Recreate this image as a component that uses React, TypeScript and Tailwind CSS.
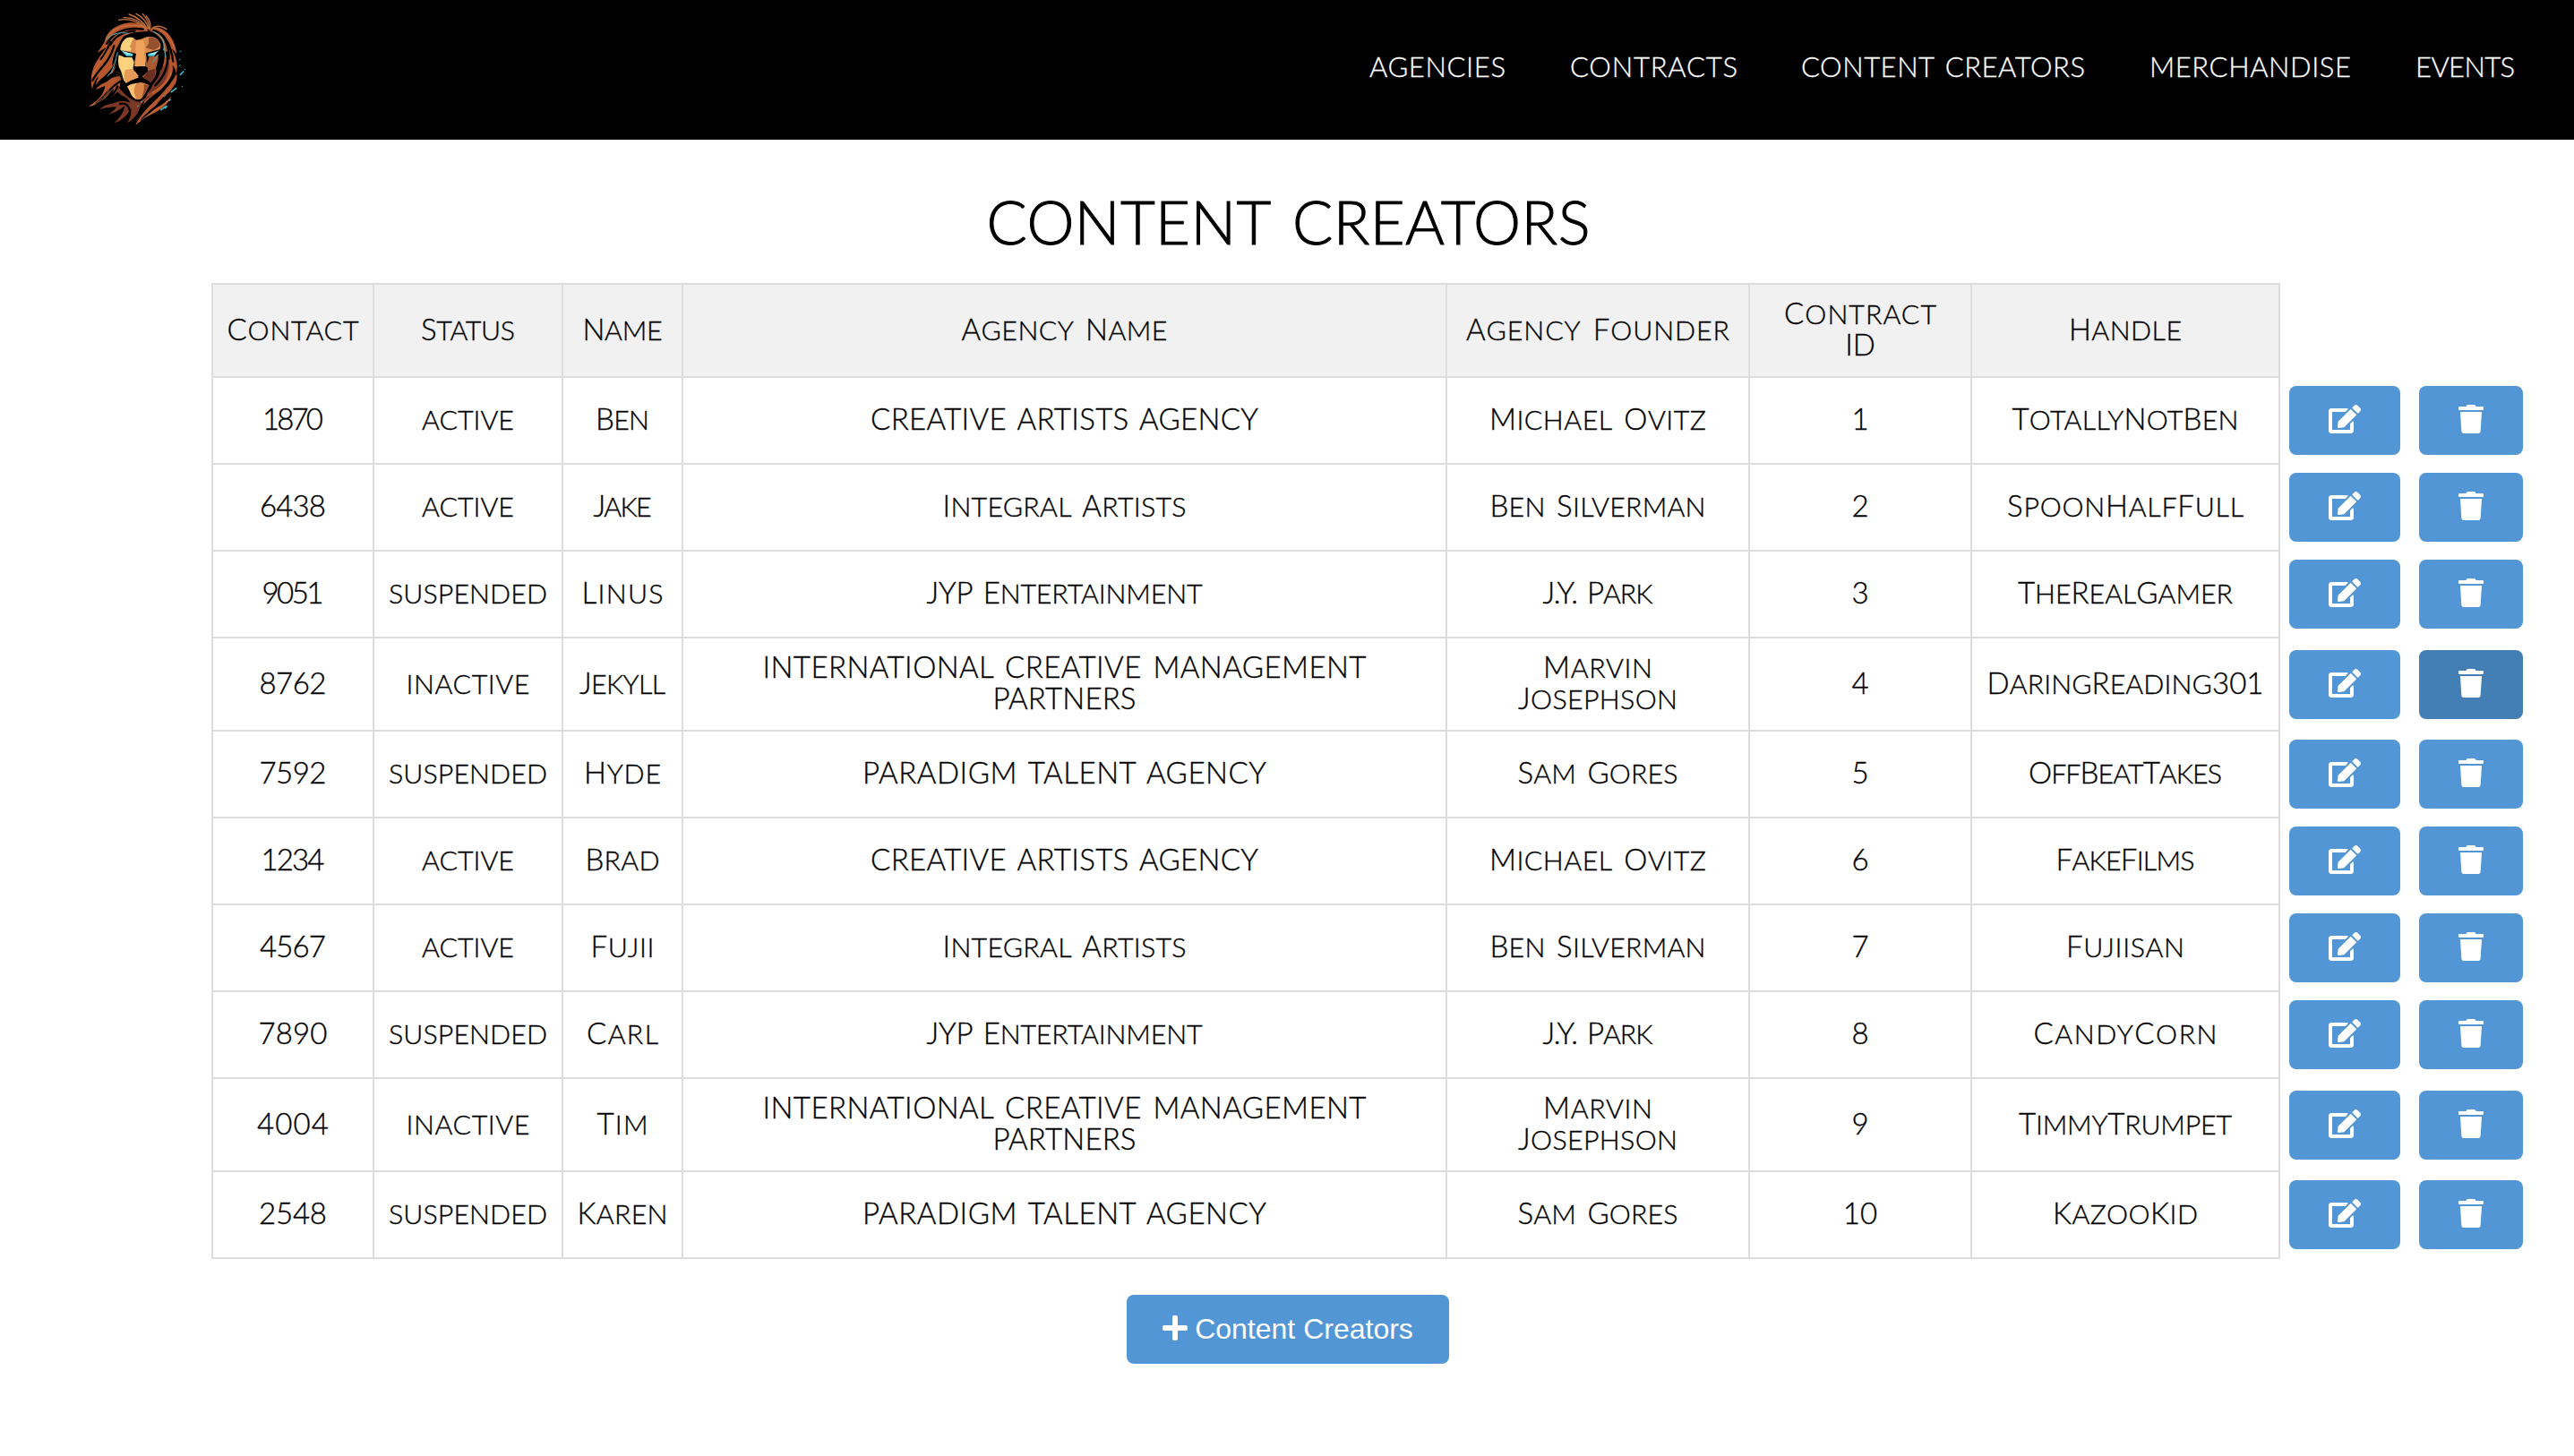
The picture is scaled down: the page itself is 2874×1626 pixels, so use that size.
import React, { useLayoutEffect, useRef, useState } from 'react';
import { FaEdit, FaPlus, FaTrash } from 'react-icons/fa';

type Label = [text: string, width: number];

/* Small-cap label whose tracking is adjusted so that it spans `width` pixels. */
function Caps({ label, small = false }: { label: Label; small?: boolean }) {
  const [text, width] = label;
  const ref = useRef<HTMLSpanElement>(null);
  const [tracking, setTracking] = useState(0);
  useLayoutEffect(() => {
    if (ref.current && text.length > 2) {
      const natural = ref.current.getBoundingClientRect().width;
      setTracking((width + 3 - natural) / (text.length - 1));
    }
  }, [text, width]);
  const parts = small ? [text] : text.split(/([a-z]+)/).filter(Boolean);
  return (
    <span
      ref={ref}
      className="inline-block whitespace-pre [word-spacing:0.1em]"
      style={{ letterSpacing: tracking, marginRight: -tracking }}
    >
      {parts.map((p, i) =>
        /[a-z]/.test(p) ? (
          <span key={i} className="text-[0.92em] uppercase">
            {p}
          </span>
        ) : (
          p
        ),
      )}
    </span>
  );
}

const nav: { label: Label; gap: string }[] = [
  { label: ['AGENCIES', 149], gap: 'mr-[72px]' },
  { label: ['CONTRACTS', 184], gap: 'mr-[71px]' },
  { label: ['CONTENT CREATORS', 314], gap: 'mr-[72px]' },
  { label: ['MERCHANDISE', 222], gap: 'mr-[72px]' },
  { label: ['EVENTS', 108], gap: 'mr-[66px]' },
];

const head: Label[][] = [
  [['Contact', 144]],
  [['Status', 102]],
  [['Name', 86]],
  [['Agency Name', 227]],
  [['Agency Founder', 291]],
  [['Contract', 167], ['ID', 34]],
  [['Handle', 123]],
];

const active: Label = ['active', 100];
const suspended: Label = ['suspended', 174];
const inactive: Label = ['inactive', 135];

const caa: Label[][] = [[['CREATIVE ARTISTS AGENCY', 430]], [['Michael Ovitz', 239]]];
const integral: Label[][] = [[['Integral Artists', 269]], [['Ben Silverman', 238]]];
const jyp: Label[][] = [[['JYP Entertainment', 305]], [['J.Y. Park', 120]]];
const icm: Label[][] = [
  [['INTERNATIONAL CREATIVE MANAGEMENT', 671], ['PARTNERS', 157]],
  [['Marvin', 119], ['Josephson', 175]],
];
const paradigm: Label[][] = [[['PARADIGM TALENT AGENCY', 448]], [['Sam Gores', 176]]];

const rows: Label[][][] = [
  [[['1870', 65]], [active], [['Ben', 57]], ...caa, [['1', 6]], [['TotallyNotBen', 250]]],
  [[['6438', 71]], [active], [['Jake', 62]], ...integral, [['2', 15]], [['SpoonHalfFull', 261]]],
  [[['9051', 66]], [suspended], [['Linus', 88]], ...jyp, [['3', 15]], [['TheRealGamer', 237]]],
  [[['8762', 72]], [inactive], [['Jekyll', 93]], ...icm, [['4', 15]], [['DaringReading301', 306]]],
  [[['7592', 72]], [suspended], [['Hyde', 83]], ...paradigm, [['5', 15]], [['OffBeatTakes', 213]]],
  [[['1234', 68]], [active], [['Brad', 80]], ...caa, [['6', 15]], [['FakeFilms', 152]]],
  [[['4567', 71]], [active], [['Fujii', 68]], ...integral, [['7', 15]], [['Fujiisan', 129]]],
  [[['7890', 74]], [suspended], [['Carl', 77]], ...jyp, [['8', 15]], [['CandyCorn', 202]]],
  [[['4004', 77]], [inactive], [['Tim', 54]], ...icm, [['9', 15]], [['TimmyTrumpet', 235]]],
  [[['2548', 73]], [suspended], [['Karen', 98]], ...paradigm, [['10', 31]], [['KazooKid', 159]]],
];

function Lines({ lines }: { lines: Label[] }) {
  return (
    <div className="flex flex-col items-center pb-[4px]">
      {lines.map((l) => (
        <div key={l[0]} className="h-[35px]">
          <Caps label={l} />
        </div>
      ))}
    </div>
  );
}

function Lion() {
  return (
    <svg viewBox="0 0 600 468" className="ml-[60px] h-[156px] w-[200px]">
      {/* mane, back layers */}
      <g fill="#b5562f">
        <path d="M318 104C300 76 262 70 232 80C196 90 176 112 170 140C158 160 150 170 146 178C160 168 170 162 176 160C160 182 138 208 130 236C124 256 124 282 129 298C134 276 142 262 150 256C146 268 142 276 140 286C156 262 176 250 196 246C206 232 210 214 212 200C204 206 200 214 196 222C196 196 204 170 216 152C226 130 244 114 270 108Z" />
        <path d="M322 98C346 84 376 98 392 124C404 142 410 162 412 182C406 172 402 168 396 164C412 196 418 220 410 246C406 228 402 222 398 218C402 252 392 276 366 296C340 314 318 328 300 352C310 316 332 290 346 268C362 240 372 208 372 176C370 140 350 112 322 104Z" />
        <path d="M226 256C204 254 190 262 178 274C158 282 148 290 140 300C154 296 164 290 172 288C168 316 148 338 114 358C144 352 168 336 184 316C190 306 196 300 202 296C200 308 196 316 190 326C214 312 220 296 222 286Z" />
        <path d="M412 246C416 272 404 300 376 318C356 332 346 350 330 368C352 358 376 344 394 322C386 350 356 370 330 382C306 394 288 406 274 420C282 398 296 384 310 366C334 340 384 300 412 246Z" />
      </g>
      <g fill="#7b3726">
        <path d="M208 276C206 302 216 314 232 322C246 328 252 336 256 344C238 336 220 336 206 344C190 350 172 346 152 368C176 358 194 360 210 358C202 370 198 374 182 384C208 376 222 368 238 354C236 372 226 390 202 412C228 404 246 388 258 362C262 376 258 392 246 412C272 396 284 378 290 356C298 338 322 330 334 310L286 342C250 334 222 302 208 276Z" />
        <path d="M346 244C336 274 330 298 310 316C330 312 356 296 372 272C386 248 390 214 386 186C378 214 364 234 346 244Z" />
      </g>
      {/* forelock strands */}
      <g fill="none" stroke="#c8743c" strokeWidth="4" strokeLinecap="round">
        <path d="M218 67C252 60 286 72 306 98" />
        <path d="M234 59C264 58 292 72 310 96" />
        <path d="M252 48C278 56 300 74 314 96" />
        <path d="M276 46C296 56 312 74 318 96" />
        <path d="M298 46C310 60 320 76 320 98" />
        <path d="M310 54C320 66 326 80 323 96" />
        <path d="M330 94C346 84 364 88 378 98" />
      </g>
      {/* dark partings in the mane */}
      <g fill="none" stroke="#000" strokeLinecap="round" strokeWidth="7">
        <path d="M178 146C200 108 240 90 300 98" />
        <path d="M190 150C204 122 232 106 272 104" />
        <path d="M130 270C150 228 184 216 202 154" />
        <path d="M150 282C170 256 198 240 208 208" />
        <path d="M158 198C172 182 180 166 190 140" />
        <path d="M334 102C374 112 392 150 400 206" />
        <path d="M364 118C380 140 386 166 386 196" />
        <path d="M404 234C396 276 360 300 324 344" />
        <path d="M142 348C176 322 186 292 224 272" />
        <path d="M184 328C204 314 208 302 214 290" />
        <path d="M294 402C326 362 376 342 406 288" />
        <path d="M222 348C242 344 250 352 254 368" />
        <path d="M378 176C388 214 372 256 340 286" />
      </g>
      <g fill="none" stroke="#d98545" strokeWidth="2" strokeLinecap="round">
        <path d="M176 124C200 92 248 78 292 88" />
        <path d="M130 256C142 220 166 202 182 166" />
        <path d="M344 94C376 102 396 134 406 168" />
        <path d="M124 354C156 344 172 322 186 302" />
        <path d="M288 406C316 380 352 368 382 338" />
        <path d="M330 310C356 292 386 276 394 242" />
      </g>
      {/* face */}
      <path d="M232 124C256 104 280 126 302 116C326 104 360 118 368 150C370 176 360 190 358 212C360 246 348 266 332 282C320 290 310 276 292 276C272 276 256 290 240 284C224 274 220 246 212 230C208 204 212 150 232 124Z" fill="#000" />
      <path d="M236 134C250 120 264 122 276 134C288 134 300 128 312 124C336 120 352 130 358 150C360 164 352 172 340 174L316 182L306 216L276 228L264 184L224 172C222 156 226 144 236 134Z" fill="#d98b4d" />
      <path d="M236 134C246 124 256 124 268 128C258 142 260 150 254 156C262 162 260 168 256 172L224 168C224 152 228 144 236 134Z" fill="#fbd07d" />
      <path d="M318 126C340 122 356 136 356 156L336 168L308 160L318 146Z" fill="#94502f" />
      <path d="M276 136L300 134L306 156L304 182L308 222H270L276 194L274 166Z" fill="#f0a35d" />
      <path d="M218 184L238 192L262 192L270 206L266 226C272 240 278 248 284 254C276 266 252 268 242 278C228 266 232 246 220 228C214 212 216 196 218 184Z" fill="#fbd27e" />
      <path d="M240 234L266 230C274 242 282 252 284 260C268 264 254 270 244 278C234 268 234 250 240 234Z" fill="#e69a56" />
      <path d="M312 188L348 184C356 206 338 222 344 240C340 260 332 270 324 276C314 266 302 264 296 256L316 240L308 222Z" fill="#a9582f" />
      <path d="M318 236L340 230C344 252 334 266 324 276L300 258Z" fill="#6b3021" />
      <path d="M266 226C276 222 304 222 314 226C316 236 312 242 300 242L294 252V264C310 266 322 276 324 286C306 274 298 272 290 272C278 272 262 278 248 284C262 272 280 266 288 264V250L280 242C270 240 266 236 266 226Z" fill="#000" />
      <path d="M246 290C262 278 282 278 292 276C304 278 314 282 320 286C312 300 306 316 296 328C288 338 274 334 264 324C256 312 254 298 246 290Z" fill="#d98547" />
      <path d="M246 290C258 282 270 282 278 280C264 296 270 312 276 332C258 324 256 302 246 290Z" fill="#fac172" />
      <path d="M302 282L320 286C312 300 304 318 294 328C300 312 304 298 302 282Z" fill="#984b2c" />
      {/* brows and eyes */}
      <path d="M220 168L262 176L276 180L270 210L262 190L240 190ZM360 164L322 174L308 178L314 210L320 190L342 188Z" fill="#000" />
      <path d="M220 162C230 172 248 178 266 180L264 188L244 188L234 178ZM360 162C352 172 336 176 316 180L316 188L336 188L344 178Z" fill="#4fd0dc" />
      <path d="M232 172L262 180L246 182ZM350 172L320 181L336 182Z" fill="#b9f3f2" />
      {/* cyan rim light */}
      <g fill="none" stroke="#4ab5bd" strokeWidth="3" strokeLinecap="round">
        <path d="M176 132C196 112 222 106 250 112" />
        <path d="M214 176C204 206 204 236 180 256" />
        <path d="M334 106C358 114 376 140 368 168" />
        <path d="M370 156L374 190M350 184L332 208" />
      </g>
      <g fill="none" stroke="#35bfc8" strokeWidth="5" strokeLinecap="round">
        <path d="M360 368L376 356M374 362L378 356M394 308L410 296M424 250L434 240M388 336L390 334" />
        <path d="M422 174L426 170M420 202L424 198M420 222L423 218M438 234L440 232M370 324L376 318M430 290V289M280 356L284 354M292 342L296 340" strokeWidth="3" />
      </g>
      <path d="M208 250L228 254M210 262L230 260M208 240L226 248M214 272L232 266" stroke="#6d4a25" strokeWidth="1.5" />
    </svg>
  );
}

const button = 'flex h-[77px] items-start justify-center rounded-[8px] pt-[21px] text-[32px] text-white';

export default function App() {
  return (
    <div className="h-[1626px] w-[2874px] overflow-hidden bg-white font-['Lato',sans-serif] text-black">
      <header className="flex h-[156px] items-center bg-black text-white">
        <Lion />
        <nav className="ml-auto flex pb-[8px] text-[31px] leading-[36px] font-light [-webkit-text-stroke:0.3px_white]">
          {nav.map((n) => (
            <a key={n.label[0]} className={n.gap}>
              <Caps label={n.label} small />
            </a>
          ))}
        </nav>
      </header>

      <h1 className="flex h-[160px] items-start justify-center pt-[51px] pl-[3px] text-[67px] leading-[80px] font-light [-webkit-text-stroke:1px_black]">
        <Caps label={['CONTENT CREATORS', 671]} small />
      </h1>

      <table className="ml-[236px] w-[2591px] table-fixed border-collapse text-center text-[33px] leading-[35px] font-light [-webkit-text-stroke:0.35px_black]">
        <colgroup>
          <col className="w-[180px]" />
          <col className="w-[211px]" />
          <col className="w-[134px]" />
          <col className="w-[853px]" />
          <col className="w-[338px]" />
          <col className="w-[248px]" />
          <col className="w-[344px]" />
          <col className="w-[146px]" />
          <col className="w-[136px]" />
        </colgroup>
        <thead>
          <tr className="h-[104px]">
            {head.map((h) => (
              <th key={h[0][0]} className="border-2 border-[#ddd] bg-[#f1f1f1] p-0 font-light">
                <Lines lines={h} />
              </th>
            ))}
          </tr>
        </thead>
        <tbody>
          {rows.map((r, i) => (
            <tr key={i} className={r[3].length > 1 ? 'h-[104px]' : 'h-[97px]'}>
              {r.map((c, j) => (
                <td key={j} className="border-2 border-[#ddd] p-0">
                  <Lines lines={c} />
                </td>
              ))}
              <td className="p-0 pl-[10px]">
                <button className={`${button} w-[124px] bg-[#5296d6]`}>
                  <FaEdit className="h-[32px] w-[36px]" />
                </button>
              </td>
              <td className="p-0 pl-[10px]">
                <button className={`${button} w-[116px] ${i === 3 ? 'bg-[#437fb5]' : 'bg-[#5296d6]'}`}>
                  <FaTrash className="h-[32px] w-[28px]" />
                </button>
              </td>
            </tr>
          ))}
        </tbody>
      </table>

      <div className="flex justify-center pt-[40px] pl-[2px]">
        <button className={`${button} w-[360px] gap-[8px] bg-[#5296d6] font-['Liberation_Sans',Arial,sans-serif]`}>
          <FaPlus className="h-[32px] w-[28px]" />
          <span className="leading-[34px]">Content Creators</span>
        </button>
      </div>
    </div>
  );
}
